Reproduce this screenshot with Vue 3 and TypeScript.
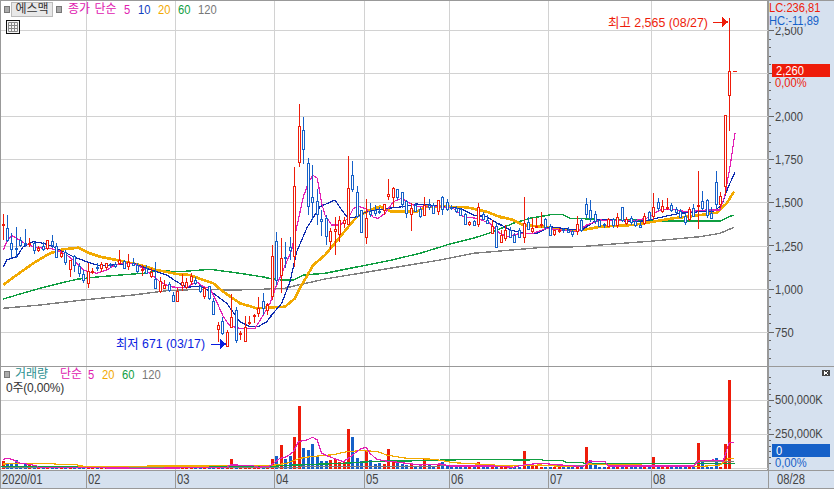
<script setup lang="ts">
type Row = [number, number, number, number, number, number]
type Pt = [number, number]
const RED = '#ee1c0a'
const BLUE = '#1560c8'

// rows: x, wick top, wick bottom, body top, body bottom, 0 red / 1 blue (3x crop coordinates)
const group = (ox: number, oy: number, rows: Row[]): Row[] =>
  rows.map(([x, a, b, c, d, k]) => [ox + x / 3, oy + a / 3, oy + b / 3, oy + c / 3, oy + d / 3, k])

const candles: Row[] = [
  ...group(0, 200, [
    [10,42,120,72,75,0],[22,45,125,85,120,1],[34,100,175,130,148,1],[48,80,175,144,147,1],[61,112,140,120,136,1],
    [75,88,140,129,132,1],[88,115,140,129,132,0],[103,125,162,130,150,1],[115,138,155,145,152,0],[129,125,152,138,148,1],
    [143,120,150,122,145,0],[157,105,145,125,138,1],[170,130,175,138,172,1],[184,150,175,160,170,0],[197,150,195,158,188,1],
    [211,180,230,182,208,0],[224,165,215,170,198,1],[238,190,230,198,220,1],[251,210,248,222,240,1],[265,188,265,215,250,0],
    [278,205,222,214,217,0],[291,188,212,202,205,1],[305,185,215,192,205,0],[319,190,210,190,203,0],[332,190,205,193,196,1],
    [346,185,205,193,200,1],[359,150,195,180,190,0],[373,180,208,185,205,1],[386,162,210,187,198,0],[400,175,198,190,195,1],
    [413,190,218,196,215,1],[427,195,228,208,212,0],[440,195,222,205,220,1],[454,205,235,218,230,0],[467,185,268,238,265,1],
    [481,230,278,245,275,0],[494,240,268,255,265,0],[508,245,275,252,270,1],[521,275,305,285,302,1],[533,265,305,275,305,0],
    [547,222,272,248,258,0],[560,235,268,248,262,0],[574,220,255,228,242,0],[587,230,255,240,248,1],[601,255,278,260,275,1],
    [614,260,298,265,288,0],[628,258,300,260,297,1],[641,295,345,303,342,1],[655,365,425,375,388,0],[667,350,405,365,402,1],
    [682,390,440,398,440,0],[695,282,385,352,382,0],[709,322,428,332,422,1],[722,392,420,399,402,0],[736,348,425,382,425,0],
    [749,348,375,367,370,0],[763,342,370,345,348,0],[775,292,352,325,340,0],[790,278,345,305,325,1],[803,310,342,312,330,0],
  ]),
  ...group(265, 225, [
    [8,235,270,240,255,0],[22,60,225,95,215,0],[35,20,180,48,165,1],[50,38,205,100,152,0],[62,50,130,97,100,1],[76,35,105,67,77,1],
  ]),
  ...group(260, 90, [
    [104,230,530,290,500,0],[118,42,232,108,215,0],[131,82,222,120,178,1],[145,205,375,220,350,1],[158,225,390,322,338,1],
    [172,298,405,335,375,1],[185,360,438,388,395,1],[199,375,465,385,440,1],[212,415,480,425,455,0],[226,380,495,418,425,0],
    [239,378,455,390,432,0],[253,380,415,390,400,0],[266,198,405,295,402,0],[277,213,305,256,298,1],[292,288,385,306,378,1],
    [305,360,428,362,428,1],[319,328,462,385,443,0],[332,340,380,365,375,1],[346,345,378,362,372,1],[359,350,372,364,367,1],
    [373,342,375,342,360,0],[385,268,330,314,320,0],[400,290,350,295,322,0],[413,298,330,298,322,1],[427,308,355,308,345,1],
    [440,330,385,335,372,1],[454,340,422,355,372,0],[467,340,365,345,362,1],[481,350,385,358,380,1],[494,322,378,345,375,0],
    [508,328,360,345,352,1],[521,340,370,345,368,1],[535,332,375,332,365,0],[548,318,375,322,358,1],[562,328,362,338,358,1],
    [575,345,360,353,356,1],[589,348,368,354,362,1],[602,355,378,358,375,1],[616,370,405,372,403,1],[629,392,408,397,403,0],
    [643,390,408,393,405,1],[656,340,412,352,402,0],[670,365,390,372,388,1],[683,375,402,390,400,1],[697,390,432,408,430,0],
    [710,398,475,410,472,1],[724,420,458,435,455,0],[737,405,452,422,445,0],[751,410,445,420,442,1],[764,428,458,435,455,1],
  ]),
  ...group(500, 130, [
    [58,295,325,300,320,1],[72,202,338,280,322,0],[85,260,300,278,298,1],[98,265,310,295,305,0],[110,265,295,289,292,0],
    [124,247,295,284,287,0],[137,265,300,268,292,1],[151,283,318,288,315,1],[164,300,318,302,315,0],[178,295,310,301,304,0],
    [191,293,308,297,300,1],[205,292,310,300,305,1],[218,300,320,304,312,1],[232,258,315,283,305,0],[245,265,305,270,300,1],
    [259,205,265,222,252,1],[271,210,275,240,265,1],[286,243,282,253,275,1],[299,270,292,272,290,1],[313,280,295,284,287,1],
    [325,265,290,268,288,0],[340,265,295,268,285,1],[352,250,295,262,285,0],[367,230,275,232,272,1],[379,262,285,268,280,0],
    [394,258,285,265,278,1],[406,268,292,275,288,1],[421,275,295,285,290,1],[433,250,285,260,282,0],[448,243,270,247,268,1],
    [460,190,270,232,258,0],[475,205,242,218,235,1],[488,210,250,228,242,0],[502,205,240,231,234,0],[514,218,245,226,240,1],
    [529,232,252,238,248,1],[542,237,262,243,260,1],[556,250,285,258,275,1],[568,232,272,237,268,0],[581,222,262,235,260,1],
    [595,124,296,226,229,0],[607,182,240,214,235,1],[622,208,265,210,255,1],[635,232,268,250,265,1],[649,124,238,157,222,1],
    [661,186,235,198,222,0],[676,-45,195,-45,168,0],
  ]),
  [729.3, 18, 131, 71, 95, 0],
]

const scale = (ox: number, oy: number, pts: number[][]): Pt[] =>
  pts.map(([x, y]) => [ox + x / 3, oy + y / 3])
const toPoints = (pts: Pt[]) => pts.map(([x, y]) => `${x.toFixed(1)},${y.toFixed(1)}`).join(' ')

const priceLines = [
  { color: '#7f7f7f', width: 1.4, pts: [
    ...scale(0, 200, [[10,325],[120,315],[250,300],[400,285],[500,272],[600,268],[700,270],[795,268]]),
    ...scale(265, 225, [[0,192],[60,190],[100,180],[180,162]]),
    ...scale(260, 90, [[540,510],[640,490],[780,478]]),
    ...scale(500, 130, [[130,352],[240,350],[340,342],[460,333],[600,320],[660,310],[702,292]]),
  ] },
  { color: '#0f9e41', width: 1.4, pts: [
    ...scale(0, 200, [[10,297],[60,282],[120,265],[180,250],[230,238],[300,230],[360,225],[430,220],[480,212],[540,215],[630,208],[720,220],[795,232]]),
    ...scale(265, 225, [[0,158],[50,165],[85,165],[115,150],[180,145]]),
    ...scale(260, 90, [[395,510],[480,490],[570,462],[640,445],[700,425]]),
    ...scale(500, 130, [[40,280],[90,265],[160,253],[185,253],[210,265],[300,268],[420,270],[480,273],[660,273],[700,255]]),
  ] },
  { color: '#f2a900', width: 2.6, pts: [
    ...scale(0, 200, [[10,255],[50,225],[100,190],[150,160],[190,148],[235,143],[270,160],[300,170],[360,182],[420,195],[470,210],[530,222],[570,225],[610,240],[640,250],[670,275],[720,310],[770,325],[795,323]]),
    ...scale(265, 225, [[60,245],[90,220],[110,180],[145,120],[180,90]]),
    ...scale(260, 90, [[290,380],[330,360],[360,350],[395,365],[470,365],[500,350],[560,350],[620,352],[680,365],[730,385]]),
    ...scale(500, 130, [[0,260],[40,270],[70,285],[130,290],[200,300],[250,300],[300,290],[400,285],[460,275],[520,265],[580,258],[650,248],[680,220],[702,185]]),
  ] },
  { color: '#0d2bb0', width: 1.2, pts: [
    ...scale(0, 200, [[10,200],[20,180],[50,170],[70,140],[100,125],[130,130],[160,140],[180,150],[220,170],[260,185],[300,198],[340,195],[400,190],[440,205],[470,215],[500,225],[530,245],[560,262],[600,258],[640,280],[680,310],[720,365],[750,380],[775,380],[800,365],[816,345]]),
    ...scale(265, 225, [[20,270],[50,235],[75,170],[95,80],[125,10]]),
    ...scale(260, 90, [[180,350],[225,330],[245,360],[265,385],[290,380],[320,365],[350,360],[385,355],[430,350],[470,342],[510,345],[560,352],[600,355],[640,375],[680,380],[720,405]]),
    ...scale(500, 130, [[0,283],[30,300],[70,310],[110,310],[150,290],[210,298],[245,300],[290,270],[340,270],[400,275],[440,272],[490,260],[540,250],[600,245],[640,245],[665,225],[685,170],[705,127]]),
  ] },
  { color: '#e220b4', width: 1.2, pts: [
    ...scale(0, 200, [[10,150],[20,125],[35,107],[50,115],[70,128],[100,140],[130,145],[150,145],[170,150],[200,165],[225,185],[250,210],[265,215],[290,220],[320,210],[345,195],[370,190],[400,190],[430,205],[455,225],[480,245],[510,260],[530,262],[560,262],[590,245],[610,260],[630,265],[650,305],[670,350],[690,378],[720,385],[745,385],[765,385],[790,345],[810,310],[830,255]]),
    ...scale(260, 90, [[95,480],[115,390],[130,320],[145,280],[158,255],[172,265],[185,340],[195,375],[215,405],[240,405],[265,385],[280,355],[300,350],[320,358],[340,382],[355,385],[375,370],[400,335],[425,325],[450,340],[470,350],[500,350],[540,350],[580,355],[610,380],[650,385],[690,400],[720,430]]),
    ...scale(500, 130, [[20,320],[60,310],[100,310],[140,295],[180,300],[230,305],[260,285],[300,270],[340,272],[400,272],[440,265],[480,240],[520,238],[560,245],[620,240],[660,240],[675,195],[690,110],[705,10]]),
  ] },
]

const gridX = [86.5, 175.5, 274.5, 364.5, 449.5, 548.5, 651.5]
const gridY = [30.5, 73.5, 116.5, 159.5, 202.5, 246.5, 289.5, 332.5]
const volGridY = [400.5, 434.5]

const floor = (v: number) => Math.floor(v) + 0.5
const pixelCandles = candles.map(([x, wt, wb, bt, bb, k]) => ({
  x: floor(x),
  wt: Math.round(wt),
  wb: Math.round(wb),
  bt: floor(bt),
  bh: Math.max(1, Math.round(bb - bt)),
  color: k ? BLUE : RED,
}))

// volume tops by candle x (absolute)
const tallBars: Pt[] = [
  ...scale(0, 360, [[10,303],[22,310],[34,312],[48,300],[75,312],[88,312],[695,297],[790,315],[818,297]]),
  ...scale(260, 360, [[50,288],[64,255],[76,297],[90,287],[104,231],[118,138],[131,264],[145,270],[158,252],[172,288],[185,303],[199,303],[212,300],[226,297],[239,306],[253,305],[266,207],[277,231],[292,294],[305,303],[319,270],[332,300],[346,312],[359,310],[373,312],[385,267],[400,303],[413,306],[427,312],[440,315],[454,312],[467,318],[481,315],[494,297],[508,315],[521,318],[535,312],[548,305],[562,315],[575,318],[589,320],[602,318],[656,306],[670,318]]),
  ...scale(260, 360, [[790,273],[803,312],[817,318],[830,318]]),
  ...scale(540, 360, [[139,261],[150,300],[165,315],[340,291],[475,249],[487,305],[528,295],[556,252],[568,60]]),
]
const volumeReds = [586, 698, 653]
const bars = candles.map(([x, , , , , k]) => {
  const hit = tallBars.find(([tx]) => Math.abs(tx - x) < 2)
  const top = hit ? Math.round(hit[1]) : 467
  const red = !k || (top < 455 && volumeReds.some((v) => Math.abs(v - x) < 3))
  return { x: Math.floor(x) - 1, y: top, h: 469 - top, color: red ? RED : BLUE }
})

const volLines = [
  { color: '#7f7f7f', width: 1, pts: [[2,468],[300,467],[440,466],[586,465],[695,463],[697,461],[734,461]] as Pt[] },
  { color: '#0f9e41', width: 1.4, pts: [
    ...scale(0, 360, [[0,320],[260,320]]),
    ...scale(260, 360, [[0,320],[110,315],[250,310],[350,304],[480,302],[650,298],[800,300],[840,298]]),
    ...scale(540, 360, [[10,301],[65,301],[80,308],[130,308],[135,312],[585,310]]),
  ] },
  { color: '#f2a900', width: 1.2, pts: [
    ...scale(0, 360, [[10,312],[60,310],[165,310],[165,313],[230,313],[235,318],[270,319]]),
    ...scale(260, 360, [[30,317],[80,310],[120,295],[150,290],[220,284],[260,275],[300,272],[350,274],[380,285],[440,295],[525,298],[580,308],[650,312],[750,318],[840,315]]),
    ...scale(540, 360, [[80,320],[130,320],[140,312],[440,318],[470,320],[540,315],[565,295],[582,295]]),
  ] },
  { color: '#e220b4', width: 1.2, pts: [
    ...scale(0, 360, [[10,298],[20,295],[35,298],[60,310],[80,312],[110,317],[115,322],[450,325],[680,322],[690,315],[755,316],[775,322],[810,318]]),
    ...scale(260, 360, [[60,295],[80,290],[100,275],[115,245],[140,240],[158,232],[172,240],[185,280],[200,287],[230,298],[250,305],[265,295],[300,268],[318,262],[330,280],[350,298],[370,302],[400,305],[440,310],[480,315],[540,312],[570,318],[620,318],[700,318],[760,322],[790,315],[840,310]]),
    ...scale(540, 360, [[130,320],[150,303],[195,305],[205,318],[460,318],[475,303],[520,300],[550,303],[560,270],[568,247],[582,247]]),
  ] },
]

const priceLabels = [
  { text: '2,500', y: 30 }, { text: '2,000', y: 116 }, { text: '1,750', y: 159 }, { text: '1,500', y: 202 },
  { text: '1,250', y: 246 }, { text: '1,000', y: 289 }, { text: '750', y: 332 },
]
const priceTicks: { y: number; major: boolean }[] = []
for (let i = 0; i <= 40; i++) priceTicks.push({ y: Math.round(30 + i * 8.62) + 0.5, major: i % 5 === 0 })
const volTicks: { y: number; major: boolean }[] = []
for (let i = -4; i <= 11; i++) volTicks.push({ y: Math.round(400 + i * 5.72) + 0.5, major: i === 0 || i === 6 })

const months = [
  { text: '2020/01', width: 86 }, { text: '02', width: 89 }, { text: '03', width: 99 }, { text: '04', width: 90 },
  { text: '05', width: 85 }, { text: '06', width: 99 }, { text: '07', width: 103 }, { text: '08', width: 117 },
]
</script>

<template>
  <div class="chart">
    <div class="row price-row">
      <div class="plot">
        <svg class="canvas" width="767" height="365" viewBox="1 1 767 365">
          <g class="grid">
            <line v-for="x in gridX" :key="x" :x1="x" :x2="x" y1="1" y2="366" />
            <line v-for="y in gridY" :key="y" x1="1" x2="768" :y1="y" :y2="y" />
          </g>
          <polyline v-for="l in priceLines" :key="l.color" class="ma" :points="toPoints(l.pts)" :stroke="l.color" :stroke-width="l.width" />
          <g v-for="(c, i) in pixelCandles" :key="i">
            <line :x1="c.x" :x2="c.x" :y1="c.wt" :y2="c.wb" :stroke="c.color" />
            <rect :x="c.x - 1" :y="c.bt" width="2" :height="c.bh" fill="#fff" :stroke="c.color" />
          </g>
          <line x1="733" x2="737" y1="71.5" y2="71.5" :stroke="RED" />
          <g class="note-high">
            <text x="608" y="27" textLength="100" lengthAdjust="spacingAndGlyphs">최고 2,565 (08/27)</text>
            <path d="M713 22h9M722 17.5v9l5.5-4.5z" />
          </g>
          <g class="note-low">
            <text x="116" y="348" textLength="89" lengthAdjust="spacingAndGlyphs">최저 671 (03/17)</text>
            <path d="M211 344h9M220 339.500v9l5.500-4.500z" />
          </g>
        </svg>
        <div class="legend">
          <i class="sq"></i>
          <span class="name-box">에스맥</span>
          <i class="sq second"></i>
          <span class="magenta ma-title">종가 단순</span>
          <span class="num short magenta">5</span>
          <span class="num navy">10</span>
          <span class="num orange">20</span>
          <span class="num green">60</span>
          <span class="num gray">120</span>
        </div>
        <svg class="table-icon" width="14" height="14" viewBox="0 0 14 14">
          <rect x="0.500" y="0.500" width="13" height="13" fill="#f4f4f4" stroke="#111" />
          <path d="M2.500 2.500h9v9h-9zM2.500 5.500h9M2.500 8.500h9M5.500 2.500v9M8.500 2.500v9" fill="none" stroke="#888" />
        </svg>
      </div>
      <div class="axis">
        <svg class="canvas" width="65" height="365" viewBox="769 1 65 365">
          <line v-for="t in priceTicks" :key="t.y" :x1="769" :x2="t.major ? 775 : 772" :y1="t.y" :y2="t.y" stroke="#666" />
          <text v-for="p in priceLabels" :key="p.text" class="squeeze tick-label" x="776" :y="p.y + 5">{{ p.text }}</text>
          <rect class="hc-bg" x="769" y="1" width="65" height="26" />
          <text class="squeeze lc" x="770" y="12">LC:236,81</text>
          <text class="squeeze hc" x="770" y="25">HC:-11,89</text>
          <rect x="773" y="64" width="58" height="13" :fill="RED" />
          <text class="squeeze on-box" x="777" y="75">2,260</text>
          <text class="squeeze lc" x="776" y="87">0,00%</text>
        </svg>
      </div>
    </div>

    <div class="row vol-row">
      <div class="plot">
        <svg class="canvas" width="767" height="103" viewBox="1 367 767 103">
          <g class="grid">
            <line v-for="x in gridX" :key="x" :x1="x" :x2="x" y1="367" y2="470" />
            <line v-for="y in volGridY" :key="y" x1="1" x2="768" :y1="y" :y2="y" />
            <line x1="1" x2="768" y1="468.500" y2="468.500" />
          </g>
          <rect v-for="(b, i) in bars" :key="i" :x="b.x" :y="b.y" width="3" :height="b.h" :fill="b.color" />
          <polyline v-for="l in volLines" :key="l.color" class="ma" :points="toPoints(l.pts)" :stroke="l.color" :stroke-width="l.width" />
        </svg>
        <div class="legend vol-legend">
          <i class="sq"></i>
          <span class="teal">거래량</span>
          <span class="magenta vol-title">단순</span>
          <span class="num short magenta">5</span>
          <span class="num orange">20</span>
          <span class="num green">60</span>
          <span class="num gray">120</span>
        </div>
        <div class="vol-value">0주(0,00%)</div>
      </div>
      <div class="axis">
        <svg class="canvas" width="65" height="103" viewBox="769 367 65 103">
          <line v-for="t in volTicks" :key="t.y" :x1="769" :x2="t.major ? 775 : 772" :y1="t.y" :y2="t.y" stroke="#666" />
          <text class="squeeze tick-label" x="776" y="404">500,000K</text>
          <text class="squeeze tick-label" x="776" y="438">250,000K</text>
          <rect x="773" y="444" width="58" height="13" :fill="BLUE" />
          <text class="squeeze on-box" x="777" y="455">0</text>
          <text class="squeeze hc" x="776" y="467">0,00%</text>
          <rect x="823" y="370" width="8" height="6" fill="#444" />
          <path d="M825 371.500l4 3M829 371.500l-4 3" stroke="#fff" fill="none" />
        </svg>
      </div>
    </div>

    <div class="xaxis">
      <div class="months">
        <span v-for="m in months" :key="m.text" class="month" :style="{ width: m.width + 'px' }"><span class="x-text">{{ m.text }}</span></span>
      </div>
      <span class="last-date"><span class="x-text">08/28</span></span>
    </div>
  </div>
</template>

<style scoped>
.chart {
  width: 834px;
  height: 489px;
  box-sizing: border-box;
  border-top: 1px solid #999;
  border-left: 1px solid #999;
  border-bottom: 1px solid #999;
  display: flex;
  flex-direction: column;
  background: #fff;
  font-family: "Liberation Sans", "Noto Sans CJK KR", sans-serif;
  font-size: 13px;
  overflow: hidden;
}
.row {
  display: flex;
}
.price-row {
  height: 365px;
}
.vol-row {
  height: 104px;
  border-top: 1px solid #999;
}
.plot {
  position: relative;
  width: 767px;
  flex: none;
}
.axis {
  flex: 1;
  background: #d6e1ef;
  border-left: 2px solid #999;
  margin-left: -1px;
  overflow: hidden;
}
.canvas {
  display: block;
  shape-rendering: crispEdges;
}
.axis .canvas {
  margin-left: -1px;
}
.grid line {
  stroke: #d2d2d2;
  stroke-width: 1;
}
.ma {
  fill: none;
}
.squeeze {
  font-size: 13px;
  transform-box: fill-box;
  transform-origin: 0 50%;
  transform: scaleX(0.86);
}
.note-high text,
.note-low text {
  font-size: 13px;
}
.note-high text {
  fill: #ee1c0a;
}
.note-high path {
  stroke: #ee1c0a;
  fill: #ee1c0a;
}
.note-low text {
  fill: #0a1de0;
}
.note-low path {
  stroke: #0a1de0;
  fill: #0a1de0;
}
.legend {
  position: absolute;
  left: 3px;
  top: 1px;
  height: 15px;
  display: flex;
  align-items: center;
  line-height: 15px;
}
.sq {
  flex: none;
  width: 4px;
  height: 5px;
  background: #aaa;
  border: 1px solid #777;
}
.sq.second {
  margin-left: 3px;
}
.name-box {
  box-sizing: border-box;
  flex: none;
  width: 42px;
  height: 15px;
  margin-left: 1px;
  text-align: center;
  background: #e8e8e8;
  border: 1px solid #bbb;
  color: #333;
  line-height: 13px;
  font-size: 12px;
}
.ma-title {
  flex: none;
  width: 56px;
  margin-left: 6px;
  font-size: 12px;
  word-spacing: 1px;
}
.num {
  flex: none;
  width: 20px;
  transform-origin: 0 50%;
  transform: scaleX(0.86);
}
.num.short {
  width: 14px;
}
.magenta {
  color: #e020b0;
}
.navy {
  color: #1040c0;
}
.orange {
  color: #f2a900;
}
.green {
  color: #0f9e41;
}
.gray {
  color: #777;
}
.teal {
  flex: none;
  width: 45px;
  margin-left: 5px;
  color: #2a9090;
  font-size: 12px;
}
.vol-title {
  flex: none;
  width: 28px;
  font-size: 12px;
}
.table-icon {
  position: absolute;
  left: 5px;
  top: 19px;
}
.vol-legend {
  top: 0;
}
.vol-value {
  position: absolute;
  left: 5px;
  top: 14px;
  color: #333;
  font-size: 12px;
  letter-spacing: -0.2px;
  line-height: 15px;
}
.tick-label {
  fill: #444;
}
.lc {
  fill: #ee1c0a;
}
.hc {
  fill: #1560c8;
}
.hc-bg {
  fill: #d6e1ef;
}
.on-box {
  fill: #fff;
}
.xaxis {
  flex: 1;
  display: flex;
  background: #d6e1ef;
  border-top: 1px solid #999;
  color: #444;
  line-height: 17px;
}
.months {
  display: flex;
  width: 768px;
  flex: none;
}
.month {
  box-sizing: border-box;
  flex: none;
  padding-left: 1px;
  border-right: 1px solid #999;
}
.x-text {
  display: inline-block;
  font-size: 14px;
  transform-origin: 0 50%;
  transform: scaleX(0.8);
}
.last-date {
  padding-left: 8px;
}
</style>
